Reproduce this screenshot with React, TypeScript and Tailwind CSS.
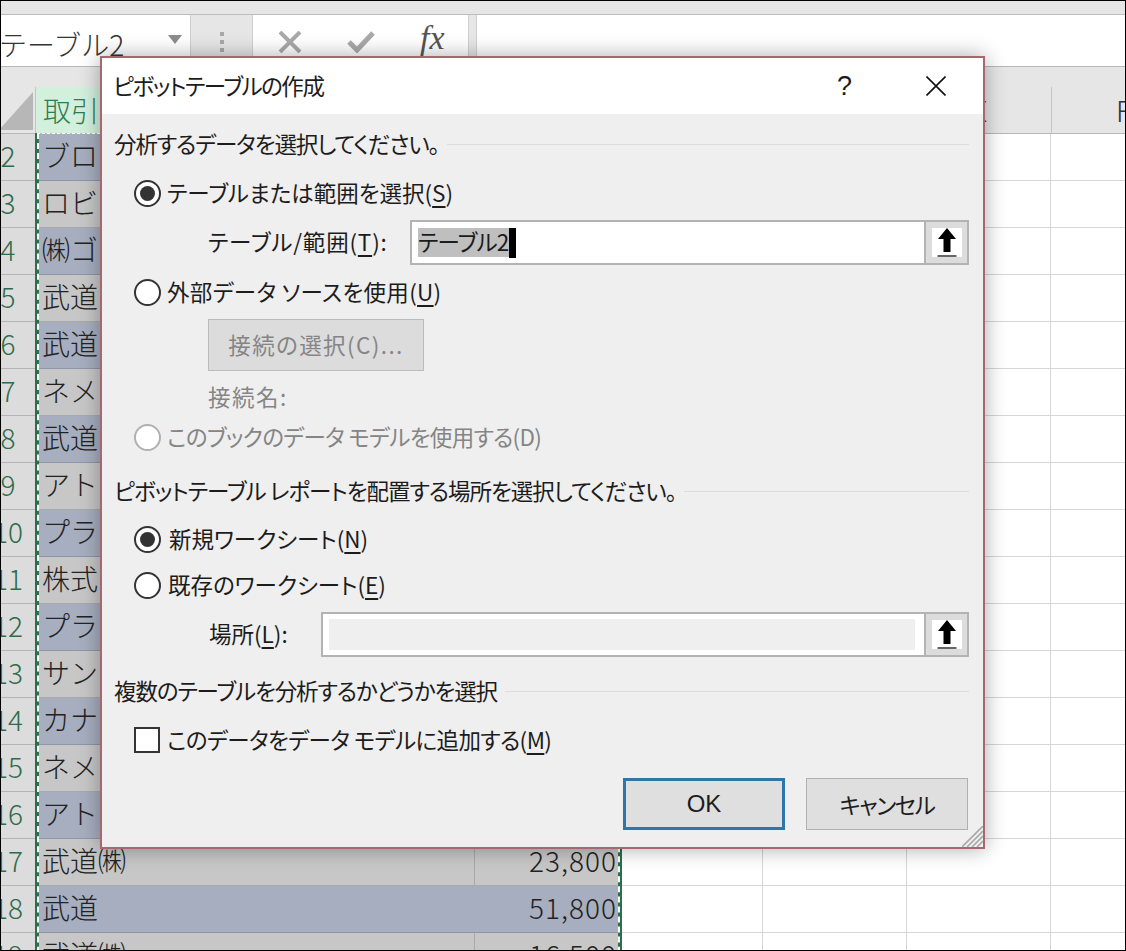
const jp = "font-['Noto_Sans_CJK_JP','Noto_Sans',sans-serif]";
const gridCols = "grid grid-cols-[54px_440px_145px_143px_144px_144px_144px] -ml-[20px]";

const rows = [
  { n: 2, a: "ブロ" },
  { n: 3, a: "ロビ" },
  { n: 4, a: "㈱ゴ" },
  { n: 5, a: "武道" },
  { n: 6, a: "武道" },
  { n: 7, a: "ネメ" },
  { n: 8, a: "武道" },
  { n: 9, a: "アト" },
  { n: 10, a: "プラ" },
  { n: 11, a: "株式" },
  { n: 12, a: "プラ" },
  { n: 13, a: "サン" },
  { n: 14, a: "カナ" },
  { n: 15, a: "ネメ" },
  { n: 16, a: "アト" },
  { n: 17, a: "武道㈱", b: "23,800" },
  { n: 18, a: "武道", b: "51,800" },
  { n: 19, a: "武道㈱", b: "16,500" },
];

function SheetRow({ n, a, b }: { n: number; a: string; b?: string }) {
  const blue = n % 2 === 0;
  const tone = blue ? "bg-[#a7aebf] border-[#8f96aa]" : "bg-[#c7c7c7] border-[#a9a9a9]";
  return (
    <div className={`${gridCols} h-[47px] text-[28px] leading-none font-light text-[#222]`}>
      <div className="flex items-center justify-center pb-[5px] bg-[#dcdcdc] border-b border-[#b4b4b4] text-[#2f6b4a]">{n}</div>
      <div className={`flex items-center pl-[7px] pb-[5px] border-b ${tone} ${b && !blue ? "border-r" : ""}`}>{a}</div>
      <div className={`flex items-center justify-end pr-[3px] pb-[5px] tracking-[1px] border-b ${tone}`}>{b}</div>
      <div className="border-b border-r border-[#d6d6d6] bg-white" />
      <div className="border-b border-r border-[#d6d6d6] bg-white" />
      <div className="border-b border-r border-[#d6d6d6] bg-white" />
      <div className="border-b border-[#d6d6d6] bg-white" />
    </div>
  );
}

function FormulaBar() {
  return (
    <>
      <div className="h-[13px] bg-[#e6e6e6] border-b border-[#bdbdbd] box-content" />
      <div className="flex h-[51px] bg-[#e6e6e6]">
        <div className="relative w-[190px] bg-white border-r border-[#d0d0d0] flex items-center overflow-hidden">
          <span className="mt-[6px] -ml-[2px] text-[28px] font-light text-[#333] whitespace-nowrap">テーブル2</span>
          <svg className="absolute left-[166px] top-[20px]" width="16" height="9" viewBox="0 0 16 9">
            <path d="M1 0h14l-7 9z" fill="#8c8c8c" />
          </svg>
        </div>
        <div className="w-[61px] flex flex-col items-center gap-[4px] pt-[17px]">
          <i className="w-[4px] h-[4px] bg-[#a8a8a8]" />
          <i className="w-[4px] h-[4px] bg-[#a8a8a8]" />
          <i className="w-[4px] h-[4px] bg-[#a8a8a8]" />
        </div>
        <div className="relative w-[217px] bg-white border-x border-[#d0d0d0]">
          <svg className="absolute left-[24px] top-[16px]" width="26" height="22" viewBox="0 0 26 22">
            <path d="M3 1l20 20M23 1L3 21" stroke="#a9a9a9" strokeWidth="4" fill="none" />
          </svg>
          <svg className="absolute left-[94px] top-[16px]" width="28" height="22" viewBox="0 0 28 22">
            <path d="M2 11l8 8L26 2" stroke="#a9a9a9" strokeWidth="5" fill="none" />
          </svg>
          <span className="absolute left-[167px] top-[3px] font-['Liberation_Serif',serif] italic text-[34px] leading-[40px] text-[#555]">fx</span>
        </div>
        <div className="w-[7px]" />
        <div className="flex-1 bg-white border-l border-[#d0d0d0]" />
      </div>
    </>
  );
}

function HeaderRow() {
  const cell = "mt-[20px] h-[46px] flex items-center justify-center border-l border-[#c4c4c4]";
  return (
    <div className={`${gridCols} h-[68px] bg-[#e6e6e6] border-t border-b border-[#b8b8b8] text-[28px] font-light text-[#333]`}>
      <div className="flex items-end justify-end pb-[3px] pr-[2px]">
        <svg width="34" height="38" viewBox="0 0 34 38">
          <path d="M34 0v38H0z" fill="#b7b7b7" />
        </svg>
      </div>
      <div className="mt-[20px] h-[46px] flex items-center pl-[7px] border-l border-[#c4c4c4] bg-[#d3f0dd] text-[#2f7a50]">取引</div>
      <div className={cell} />
      <div className={cell} />
      <div className={cell} />
      <div className={cell}>E</div>
      <div className={cell}>F</div>
    </div>
  );
}

function MoveIcon() {
  return (
    <span className="w-[30px] h-[29px] bg-white flex items-center justify-center">
      <svg width="22" height="29" viewBox="0 0 22 29">
        <path d="M11 0L20 11L14.5 11V24H7.5V11H2z" fill="#000" />
        <path d="M1.5 28h19" stroke="#000" strokeWidth="1.2" />
      </svg>
    </span>
  );
}

function RangeButton() {
  return (
    <span className="w-[45px] shrink-0 h-full flex items-center justify-center bg-[#dcdcdc] border-2 border-[#b3b3b3]">
      <MoveIcon />
    </span>
  );
}

function Radio({ checked, disabled }: { checked?: boolean; disabled?: boolean }) {
  return (
    <span
      className={`w-[27px] h-[27px] rounded-full border-2 bg-white flex items-center justify-center shrink-0 ${
        disabled ? "border-[#b0b0b0]" : "border-[#333]"
      }`}
    >
      {checked && <span className="w-[15px] h-[15px] rounded-full bg-[#333]" />}
    </span>
  );
}

function SectionTitle({ text, className }: { text: string; className: string }) {
  return (
    <div className={`flex items-center h-[32px] gap-[8px] ${className}`}>
      <span className="whitespace-nowrap pb-[2px]">{text}</span>
      <span className="flex-1 h-px bg-[#dcdcdc]" />
    </div>
  );
}

function Option({ children, className, checked, disabled }: { children: React.ReactNode; className: string; checked?: boolean; disabled?: boolean }) {
  return (
    <div className={`flex items-center h-[32px] pl-[20px] gap-[6px] whitespace-nowrap ${disabled ? "text-[#858585]" : ""} ${className}`}>
      <Radio checked={checked} disabled={disabled} />
      <span className="pb-[2px]">{children}</span>
    </div>
  );
}

const key = "underline underline-offset-[4px]";

function Dialog() {
  return (
    <div className="absolute left-[99px] top-[55px] w-[885px] h-[793px] border-2 border-[#a4686e] bg-[#efefef] shadow-[0_0_20px_rgba(0,0,0,0.33)] text-[22.5px] leading-none text-[#1c1c1c] [font-feature-settings:'palt']">
      <div className="h-[56px] bg-white flex items-center pl-[11px] pr-[37px]">
        <span className="flex-1 tracking-[-1.45px] pb-[2px]">ピボットテーブルの作成</span>
        <span className="font-['Liberation_Sans',sans-serif] text-[27px] mr-[74px]">?</span>
        <svg width="20" height="20" viewBox="0 0 20 20">
          <path d="M0.5 0.5l19 19M19.5 0.5L0.5 19.5" stroke="#111" strokeWidth="1.6" fill="none" />
        </svg>
      </div>

      <div className="flex flex-col pl-[12px] pr-[14px]">
        <SectionTitle text="分析するデータを選択してください。" className="mt-[14px] tracking-[-1.1px]" />
        <Option checked className="mt-[17px]">
          テーブルまたは範囲を選択(<span className={key}>S</span>)
        </Option>
        <div className="flex items-center h-[45px] mt-[11px]">
          <span className="ml-[94px] w-[202px] whitespace-nowrap pb-[2px] tracking-[0.8px]">
            テーブル/範囲(<span className={key}>T</span>):
          </span>
          <div className="flex-1 h-full flex bg-white border-y-2 border-l-2 border-[#b3b3b3]">
            <div className="flex-1 flex items-center pl-[6px]">
              <span className="bg-[#bfbfbf] h-[29px] flex items-center tracking-[-0.8px] pb-[2px]">テーブル2</span>
              <span className="w-[7px] h-[30px] bg-black" />
            </div>
          </div>
          <RangeButton />
        </div>
        <Option className="mt-[11px] tracking-[0.3px]">
          外部データ ソースを使用(<span className={key}>U</span>)
        </Option>
        <div className="ml-[94px] mt-[11px] w-[216px] h-[52px] flex items-center justify-center bg-[#dcdcdc] border border-[#bcbcbc] text-[#858585] tracking-[1.4px]">
          <span className="pb-[2px]">接続の選択(C)...</span>
        </div>
        <div className="ml-[94px] mt-[9px] h-[32px] flex items-center text-[#858585] tracking-[1.5px]">接続名:</div>
        <Option disabled className="mt-[9px] tracking-[-0.7px]">
          このブックのデータ モデルを使用する(D)
        </Option>
        <SectionTitle text="ピボットテーブル レポートを配置する場所を選択してください。" className="mt-[22px] tracking-[-1px]" />
        <Option checked className="mt-[16px]">
          <span className="ml-[2px]">新規ワークシート(<span className={key}>N</span>)</span>
        </Option>
        <Option className="mt-[14px]">
          <span className="ml-[1px]">既存のワークシート(<span className={key}>E</span>)</span>
        </Option>
        <div className="flex items-center h-[45px] mt-[11px]">
          <span className="ml-[95px] w-[112px] whitespace-nowrap pb-[2px]">
            場所(<span className={key}>L</span>):
          </span>
          <div className="flex-1 h-full flex bg-white border-y-2 border-l-2 border-[#b3b3b3] pl-[6px] pr-[9px] py-[5px]">
            <div className="flex-1 bg-[#efefef]" />
          </div>
          <RangeButton />
        </div>
        <SectionTitle text="複数のテーブルを分析するかどうかを選択" className="mt-[18px] tracking-[-1.1px]" />
        <div className="flex items-center h-[32px] mt-[17px] pl-[20px] gap-[7px] whitespace-nowrap tracking-[-0.6px]">
          <span className="w-[26px] h-[26px] bg-white border-2 border-[#333] shrink-0" />
          <span className="pb-[2px]">
            このデータをデータ モデルに追加する(<span className={key}>M</span>)
          </span>
        </div>
        <div className="flex justify-end gap-[21px] mt-[22px] mr-[1px]">
          <div className="w-[162px] h-[52px] flex items-center justify-center bg-[#dfdfdf] border-[3px] border-[#2d77a8] text-[24px] font-['Liberation_Sans',sans-serif]">OK</div>
          <div className="w-[162px] h-[52px] flex items-center justify-center bg-[#dfdfdf] border border-[#b0b0b0] tracking-[-1.4px]">キャンセル</div>
        </div>
      </div>

      <svg className="absolute right-0 bottom-0" width="21" height="21" viewBox="0 0 21 21">
        <path d="M21 0L0 21M21 5L5 21M21 10L10 21M21 15L15 21" stroke="#a8a8a8" strokeWidth="1.6" fill="none" />
      </svg>
    </div>
  );
}

export default function App() {
  return (
    <div className={`relative w-[1126px] h-[951px] overflow-hidden bg-white border border-black ${jp}`}>
      <FormulaBar />
      <HeaderRow />
      <div>
        {rows.map((r) => (
          <SheetRow key={r.n} {...r} />
        ))}
      </div>

      {/* copy range marquee */}
      <div className="absolute left-[34px] top-[132px] w-[587px] h-[900px] border-x-4 border-[#2b6f4c]">
        <div className="absolute -inset-x-[2px] inset-y-0 border-x-2 border-t border-dashed border-white" />
      </div>

      <Dialog />
    </div>
  );
}
